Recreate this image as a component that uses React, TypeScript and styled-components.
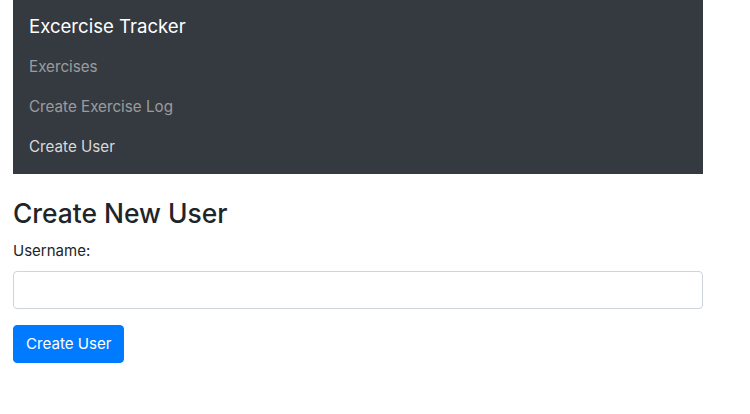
import React from "react";
import styled, { createGlobalStyle } from "styled-components";

const GlobalStyle = createGlobalStyle`
    html, body {
        margin: 0;
        padding: 0;
        background: #fff;
    }
    body {
        font-family: Inter, "Liberation Sans", sans-serif;
        font-size: 16px;
        line-height: 1.5;
        color: #212529;
    }
    * {
        box-sizing: border-box;
    }
`;

const Container = styled.div`
    width: 690px;
    margin-left: 13px;
`;

const Navbar = styled.nav`
    display: flex;
    flex-direction: column;
    background: #343a40;
    padding: 6px 16px 7px;
`;

const Brand = styled.a`
    font-size: 18.6px;
    line-height: 30px;
    padding: 5px 0 6px;
    color: #fff;
    text-decoration: none;
`;

const NavList = styled.ul`
    list-style: none;
    margin: 0;
    padding: 0;
    display: flex;
    flex-direction: column;
`;

const NavLink = styled.a<{ $active?: boolean }>`
    display: block;
    padding: 8px 0;
    font-size: 15.2px;
    line-height: 24px;
    color: ${({ $active }) => ($active ? "rgba(255,255,255,0.82)" : "rgba(255,255,255,0.5)")};
    text-decoration: none;
`;

const Content = styled.div`
    padding-top: 22px;
`;

const Title = styled.h3`
    margin: 0 0 8px;
    font-size: 26.4px;
    font-weight: 500;
    line-height: 34px;
`;

const FormGroup = styled.div`
    margin-bottom: 16px;
`;

const Label = styled.label`
    display: inline-block;
    margin-bottom: 8px;
    font-size: 15px;
`;

const Input = styled.input`
    display: block;
    width: 100%;
    height: 38px;
    padding: 6px 12px;
    font-size: 16px;
    border: 1px solid #ced4da;
    border-radius: 4px;
    background: #fff;
    color: #495057;
    outline: none;
`;

const SubmitButton = styled.button`
    height: 38px;
    padding: 6px 12px;
    font-family: inherit;
    font-size: 15.1px;
    line-height: 24px;
    color: #fff;
    background: #007bff;
    border: 1px solid #007bff;
    border-radius: 4px;
    cursor: pointer;
`;

const App: React.FC = () => {
    return (
        <>
            <GlobalStyle />
            <Container>
                <Navbar>
                    <Brand href="#">Excercise Tracker</Brand>
                    <NavList>
                        <li><NavLink href="#">Exercises</NavLink></li>
                        <li><NavLink href="#">Create Exercise Log</NavLink></li>
                        <li><NavLink href="#" $active>Create User</NavLink></li>
                    </NavList>
                </Navbar>
                <Content>
                    <Title>Create New User</Title>
                    <form onSubmit={(e) => e.preventDefault()}>
                        <FormGroup>
                            <Label>Username:</Label>
                            <Input type="text" />
                        </FormGroup>
                        <SubmitButton type="submit">Create User</SubmitButton>
                    </form>
                </Content>
            </Container>
        </>
    );
};

export default App;
